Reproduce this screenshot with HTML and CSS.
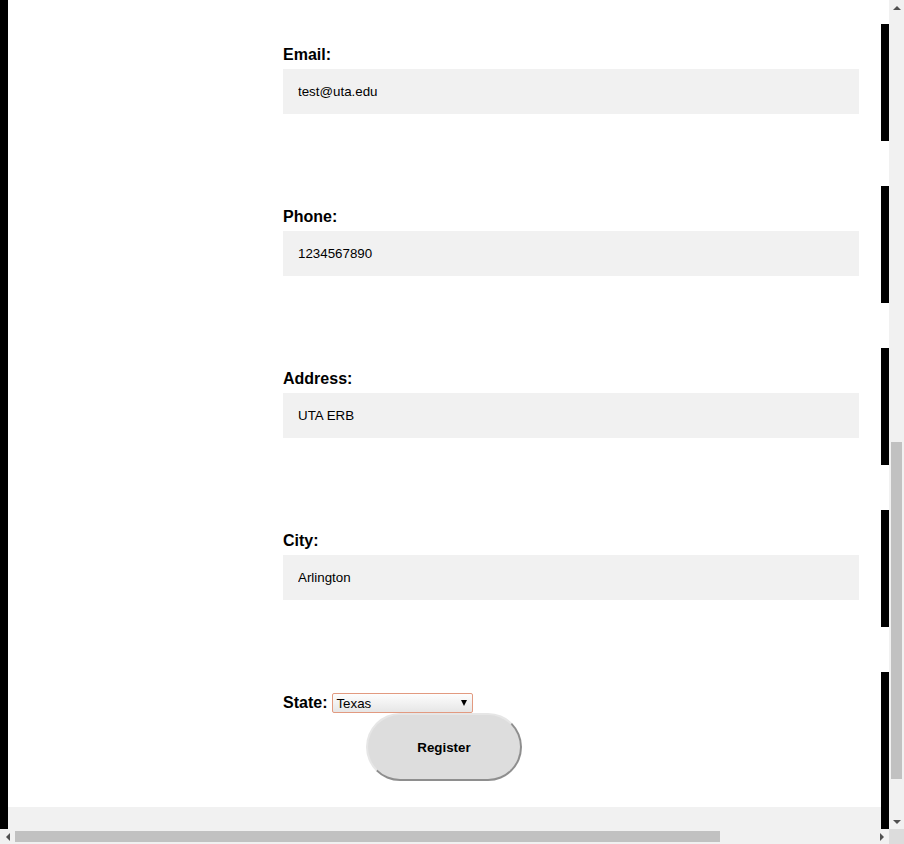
FILE: index.html
```
<!DOCTYPE html>
<html lang="en">
<head>
<meta charset="utf-8">
<title>Register</title>
<link rel="stylesheet" href="styles.css">
</head>
<body>
<div class="screen">
  <main class="main">
    <form class="form">
      <div class="field"><label class="label" for="email">Email:</label><input class="input" id="email" type="text" value="test@uta.edu"></div>
      <div class="field"><label class="label" for="phone">Phone:</label><input class="input" id="phone" type="text" value="1234567890"></div>
      <div class="field"><label class="label" for="address">Address:</label><input class="input" id="address" type="text" value="UTA ERB"></div>
      <div class="field"><label class="label" for="city">City:</label><input class="input" id="city" type="text" value="Arlington"></div>
      <div class="field field-last">
        <div class="state-row">
          <label class="label-inline" for="state">State:</label>
          <span class="select-wrap">
            <select class="select" id="state">
              <option>Texas</option>
              <option>Oklahoma</option>
              <option>Louisiana</option>
            </select>
          </span>
        </div>
        <button class="register" type="button">Register</button>
      </div>
    </form>
    <div class="footer-strip"></div>
  </main>
  <div class="vscroll">
    <div class="sb-btn"><span class="tri tri-up"></span></div>
    <div class="vtrack"><div class="vthumb"></div></div>
    <div class="sb-btn"><span class="tri tri-down"></span></div>
  </div>
  <div class="hscroll">
    <div class="sb-btn"><span class="tri tri-left"></span></div>
    <div class="htrack"><div class="hthumb"></div></div>
    <div class="sb-btn"><span class="tri tri-right"></span></div>
  </div>
  <div class="corner"></div>
</div>
</body>
</html>
```
FILE: styles.css
```
html, body {
  margin: 0;
  padding: 0;
}
body {
  font-family: "Liberation Sans", Arial, sans-serif;
  color: #000;
  background: #fff;
}
.screen {
  display: grid;
  grid-template-columns: 889px 15px;
  grid-template-rows: 829px 15px;
  width: 904px;
  height: 844px;
  overflow: hidden;
}
.main {
  box-sizing: border-box;
  overflow: hidden;
  border-left: 8px solid #000;
  padding-top: 24px;
  background: #fff;
}
.form {
  margin: 0;
}
.field {
  width: 576px;
  margin: 0 0 45px 253px;
  padding: 22px 22px 5px;
  border-right: 8px solid #000;
}
.label {
  display: block;
  font-weight: bold;
  font-size: 16px;
  line-height: 18px;
}
.input {
  display: block;
  box-sizing: border-box;
  width: 100%;
  height: 45px;
  margin: 5px 0 22px;
  padding: 0 15px;
  border: none;
  background: #f1f1f1;
  font: 13.33px "Liberation Sans", Arial, sans-serif;
  color: #000;
  outline: none;
}
.field-last {
  padding: 21px 22px 48px;
  margin-bottom: -22px;
}
.state-row {
  display: flex;
  align-items: baseline;
  gap: 5px;
}
.label-inline {
  font-weight: bold;
  font-size: 16px;
  line-height: 18px;
}
.select-wrap {
  position: relative;
  display: inline-block;
}
.select-wrap::after {
  content: "";
  position: absolute;
  right: 6px;
  top: 7px;
  border-left: 3.5px solid transparent;
  border-right: 3.5px solid transparent;
  border-top: 6px solid #000;
  pointer-events: none;
}
.select {
  -webkit-appearance: none;
  appearance: none;
  box-sizing: border-box;
  display: block;
  width: 141px;
  height: 20px;
  margin: 0;
  padding: 0 0 0 3px;
  font: 13.33px "Liberation Sans", Arial, sans-serif;
  color: #000;
  border: 1px solid #e29a80;
  border-radius: 2px;
  background: linear-gradient(#fdfdfd, #e6e6e6);
}
.register {
  display: block;
  box-sizing: border-box;
  width: 156px;
  height: 68px;
  margin: 0 0 0 83px;
  padding: 0;
  border-radius: 34px;
  border: 2px solid;
  border-color: #e6e6e6 #8e8e8e #8e8e8e #e6e6e6;
  background: #dddddd;
  font: bold 13.33px "Liberation Sans", Arial, sans-serif;
  color: #000;
}
.footer-strip {
  width: 873px;
  height: 22px;
  background: #f1f1f1;
}
.vscroll {
  display: flex;
  flex-direction: column;
  background: #f1f1f1;
}
.hscroll {
  display: flex;
  background: #f1f1f1;
}
.corner {
  background: #dcdcdc;
}
.sb-btn {
  flex: 0 0 15px;
  width: 15px;
  height: 15px;
  display: flex;
  align-items: center;
  justify-content: center;
}
.vtrack {
  flex: 1;
  padding: 427px 2px 0;
}
.vthumb {
  height: 337px;
  background: #c1c1c1;
}
.htrack {
  flex: 1;
  padding: 2px 0;
}
.hthumb {
  width: 705px;
  height: 11px;
  background: #c1c1c1;
}
.tri {
  display: block;
  width: 0;
  height: 0;
}
.tri-up {
  border-left: 4px solid transparent;
  border-right: 4px solid transparent;
  border-bottom: 4px solid #505050;
}
.tri-down {
  border-left: 4px solid transparent;
  border-right: 4px solid transparent;
  border-top: 4px solid #505050;
}
.tri-left {
  border-top: 4px solid transparent;
  border-bottom: 4px solid transparent;
  border-right: 4px solid #505050;
}
.tri-right {
  border-top: 4px solid transparent;
  border-bottom: 4px solid transparent;
  border-left: 4px solid #505050;
}
```
